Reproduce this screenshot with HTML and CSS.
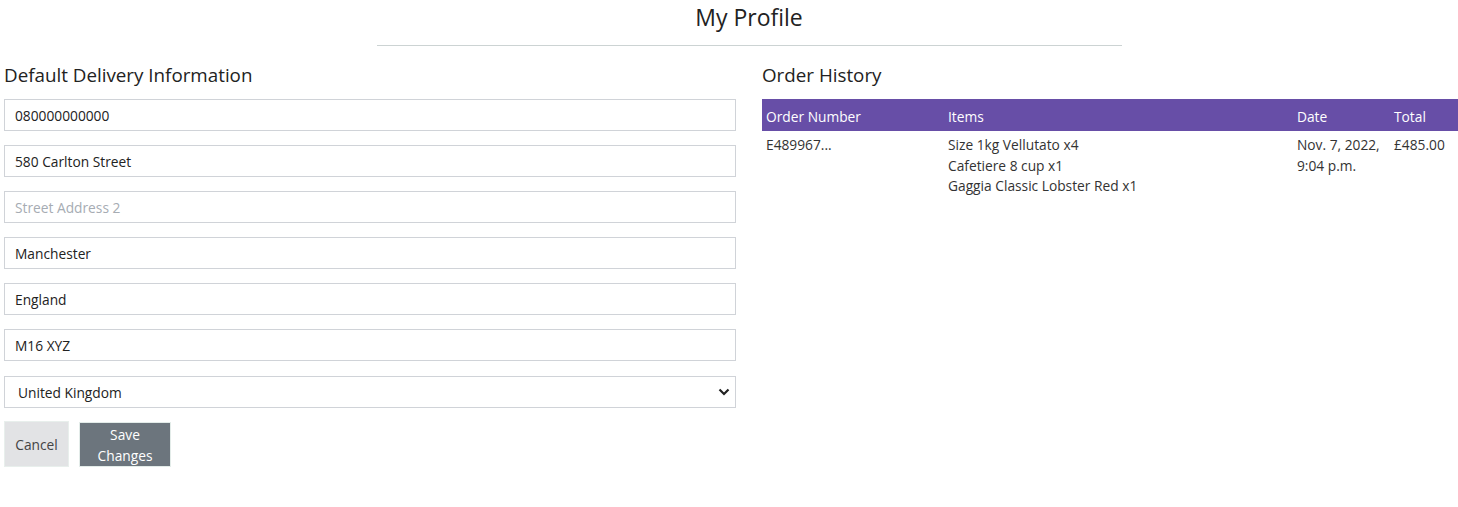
FILE: index.html
```html
<!DOCTYPE html>
<html lang="en">
<head>
<meta charset="utf-8">
<title>My Profile</title>
<link rel="stylesheet" href="styles.css">
</head>
<body>
<div class="page">
  <header class="page-head">
    <h1 class="page-title">My Profile</h1>
    <hr class="page-rule">
  </header>
  <div class="columns">
    <section class="delivery">
      <h2 class="section-title">Default Delivery Information</h2>
      <form class="profile-form">
        <input class="field" type="text" value="080000000000">
        <input class="field" type="text" value="580 Carlton Street">
        <input class="field" type="text" placeholder="Street Address 2">
        <input class="field" type="text" value="Manchester">
        <input class="field" type="text" value="England">
        <input class="field" type="text" value="M16 XYZ">
        <div class="select-wrap">
          <select class="field select">
            <option>United Kingdom</option>
          </select>
          <svg class="chevron" width="12" height="8" viewBox="0 0 12 8"><path d="M1.5 1.5 L6 6 L10.5 1.5" fill="none" stroke="#222" stroke-width="2.2"/></svg>
        </div>
        <div class="actions">
          <button type="button" class="btn btn-cancel">Cancel</button>
          <button type="button" class="btn btn-save">Save Changes</button>
        </div>
      </form>
    </section>
    <section class="history">
      <h2 class="section-title">Order History</h2>
      <table class="orders">
        <colgroup>
          <col class="c-num"><col class="c-items"><col class="c-date"><col class="c-total">
        </colgroup>
        <thead>
          <tr><th>Order Number</th><th>Items</th><th>Date</th><th>Total</th></tr>
        </thead>
        <tbody>
          <tr>
            <td>E489967...</td>
            <td>Size 1kg Vellutato x4<br>Cafetiere 8 cup x1<br>Gaggia Classic Lobster Red x1</td>
            <td>Nov. 7, 2022,<br>9:04 p.m.</td>
            <td>£485.00</td>
          </tr>
        </tbody>
      </table>
    </section>
  </div>
</div>
</body>
</html>
```
FILE: styles.css
```css
html, body {
  margin: 0;
  padding: 0;
  overflow-x: hidden;
  background: #fff;
}
body {
  font-family: "Open Sans", "Liberation Sans", sans-serif;
  font-size: 13.75px;
  color: #333;
}
.page {
  width: 1490px;
  padding-left: 4px;
}
.page-head {
  display: flex;
  flex-direction: column;
  align-items: center;
}
.page-title {
  margin: 2px 0 0;
  font-size: 23px;
  font-weight: 400;
  line-height: 30px;
  color: #222;
}
.page-rule {
  width: 745px;
  margin: 13px 0 0;
  border: 0;
  border-top: 1px solid #ccd3d3;
}
.columns {
  display: grid;
  grid-template-columns: 732px 732px;
  column-gap: 26px;
  margin-top: 17px;
}
.section-title {
  margin: 0 0 12px;
  font-size: 18.8px;
  font-weight: 400;
  line-height: 24px;
  color: #222;
}
.profile-form {
  display: flex;
  flex-direction: column;
  gap: 14px;
}
.field {
  box-sizing: border-box;
  width: 732px;
  height: 32px;
  margin: 0;
  padding: 0 10px;
  border: 1px solid #d0d3d8;
  border-radius: 0;
  font-family: inherit;
  font-size: 13.75px;
  color: #222;
  background: #fff;
  outline: none;
}
.field::placeholder {
  color: #a6acb3;
}
.select-wrap {
  position: relative;
  margin-top: 1px;
}
.select {
  appearance: none;
  -webkit-appearance: none;
  padding-left: 13px;
}
.chevron {
  position: absolute;
  right: 6px;
  top: 12px;
  pointer-events: none;
}
.actions {
  display: flex;
  gap: 10px;
  margin-top: -1px;
}
.btn {
  box-sizing: border-box;
  font-family: inherit;
  font-size: 13.75px;
  line-height: 21px;
  border-radius: 0;
  margin: 0;
  cursor: pointer;
}
.btn-cancel {
  width: 65px;
  height: 46px;
  background: #e2e3e5;
  border: 1px solid #e8efec;
  color: #444;
  padding: 0 4px;
}
.btn-save {
  width: 92px;
  height: 45px;
  margin-top: 1px;
  background: #6c757d;
  border: 1px solid #e3ece9;
  color: #fff;
  padding: 0 10px;
}
.orders {
  width: 732px;
  table-layout: fixed;
  border-collapse: collapse;
}
.c-num { width: 182px; }
.c-items { width: 349px; }
.c-date { width: 97px; }
.c-total { width: 104px; }
.orders th {
  background: #674ea7;
  color: #fff;
  font-weight: 400;
  text-align: left;
  height: 32px;
  padding: 3px 4px 0;
  box-sizing: border-box;
}
.orders td {
  vertical-align: top;
  padding: 4px 4px;
  line-height: 20.5px;
  color: #333;
}
```
